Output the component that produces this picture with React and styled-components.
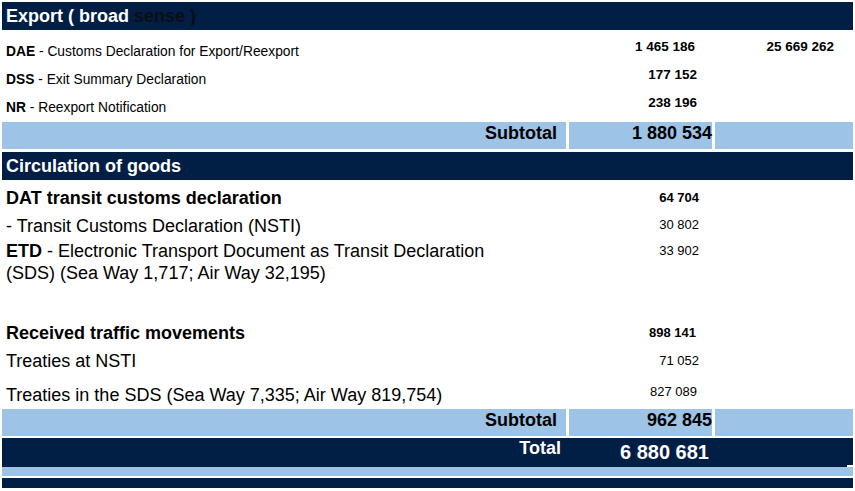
import styled, { createGlobalStyle } from "styled-components";

const navy = "#011e45";
const sky = "#9dc3e6";

const GlobalStyle = createGlobalStyle`
  html, body {
    margin: 0;
    padding: 0;
    background: #fff;
  }
  body {
    font-family: "Liberation Sans", Arial, sans-serif;
    color: #000;
  }
`;

const Sheet = styled.div`
  width: 851px;
  padding: 2px;
  display: flex;
  flex-direction: column;
`;

const SectionHeader = styled.div`
  height: 28px;
  margin-top: ${(p) => p.$mt || 0}px;
  padding-left: 4px;
  background: ${navy};
  color: #fff;
  font-size: 18px;
  font-weight: bold;
  display: flex;
  align-items: center;
  white-space: pre;

  & span {
    color: #0a0e16;
  }
`;

const Body = styled.div`
  padding-top: ${(p) => p.$pt}px;
  display: flex;
  flex-direction: column;
`;

const Row = styled.div`
  display: grid;
  grid-template-columns: 564px 143px 138px;
  column-gap: 3px;
  height: ${(p) => p.$h}px;
  margin-top: ${(p) => p.$mt || 0}px;
  align-items: center;
`;

const Label = styled.div`
  padding-left: 4px;
  font-size: ${(p) => p.$size}px;
  line-height: ${(p) => p.$lh || 22}px;
  font-weight: ${(p) => (p.$bold ? 700 : 400)};
  align-self: ${(p) => p.$self || "center"};
  margin-bottom: ${(p) => p.$mb || 0}px;
  white-space: nowrap;
`;

const Num = styled.div`
  text-align: right;
  font-size: ${(p) => p.$size || 13.5}px;
  line-height: ${(p) => p.$lh || 16}px;
  font-weight: ${(p) => (p.$bold ? 700 : 400)};
  padding-right: ${(p) => p.$pr}px;
  padding-bottom: ${(p) => p.$lift || 0}px;
  align-self: ${(p) => p.$self || "center"};
`;

const SumRow = styled.div`
  display: grid;
  grid-template-columns: 564px 143px 138px;
  column-gap: ${(p) => (p.$dark ? 0 : 3)}px;
  height: 27px;
  margin-top: ${(p) => p.$mt || 0}px;
  background: ${(p) => (p.$dark ? navy : "transparent")};
`;

const SumCell = styled.div`
  background: ${(p) => (p.$dark ? navy : sky)};
  color: ${(p) => (p.$dark ? "#fff" : "#000")};
  font-size: ${(p) => p.$size || 18}px;
  font-weight: bold;
  display: flex;
  align-items: center;
  justify-content: flex-end;
  padding-right: ${(p) => p.$pr || 0}px;
  padding-bottom: ${(p) => p.$lift || 0}px;
`;

const Band = styled.div`
  height: ${(p) => p.$h}px;
  margin-top: ${(p) => p.$mt || 0}px;
  background: ${(p) => (p.$dark ? navy : sky)};
`;

const exportRows = [
  { code: "DAE", text: "Customs Declaration for Export/Reexport", value: "1 465 186", extra: "25 669 262", pr: 17 },
  { code: "DSS", text: "Exit Summary Declaration", value: "177 152", pr: 15 },
  { code: "NR", text: "Reexport Notification", value: "238 196", pr: 15 },
];

export default function App() {
  return (
    <>
      <GlobalStyle />
      <Sheet>
        <SectionHeader>
          Export ( broad <span>sense )</span>
        </SectionHeader>
        <Body $pt={8}>
          {exportRows.map((r) => (
            <Row key={r.code} $h={28}>
              <Label $size={13.8}>
                <b>{r.code}</b> - {r.text}
              </Label>
              <Num $bold $pr={r.pr} $lift={10}>
                {r.value}
              </Num>
              <Num $bold $pr={19} $lift={10}>
                {r.extra || ""}
              </Num>
            </Row>
          ))}
        </Body>
        <SumRow>
          <SumCell $pr={9} $lift={5}>Subtotal</SumCell>
          <SumCell $lift={5}>1 880 534</SumCell>
          <SumCell />
        </SumRow>

        <SectionHeader $mt={3}>Circulation of goods</SectionHeader>
        <Body $pt={4}>
          <Row $h={28}>
            <Label $size={18} $bold>DAT transit customs declaration</Label>
            <Num $size={13} $bold $pr={13}>64 704</Num>
          </Row>
          <Row $h={28}>
            <Label $size={18}>- Transit Customs Declaration (NSTI)</Label>
            <Num $size={13} $pr={13} $lift={2}>30 802</Num>
          </Row>
          <Row $h={44}>
            <Label $size={18} $self="start">
              <b>ETD</b> - Electronic Transport Document as Transit Declaration
              <br />
              (SDS) (Sea Way 1,717; Air Way 32,195)
            </Label>
            <Num $size={13} $pr={13} $lh={22} $self="start">33 902</Num>
          </Row>
          <Row $h={28} $mt={35}>
            <Label $size={18} $bold>Received traffic movements</Label>
            <Num $size={13} $bold $pr={16}>898 141</Num>
          </Row>
          <Row $h={28}>
            <Label $size={18}>Treaties at NSTI</Label>
            <Num $size={13} $pr={13}>71 052</Num>
          </Row>
          <Row $h={33}>
            <Label $size={18} $self="end" $mb={2}>
              Treaties in the SDS (Sea Way 7,335; Air Way 819,754)
            </Label>
            <Num $size={13} $pr={15}>827 089</Num>
          </Row>
        </Body>
        <SumRow $mt={1}>
          <SumCell $pr={9} $lift={5}>Subtotal</SumCell>
          <SumCell $lift={4}>962 845</SumCell>
          <SumCell />
        </SumRow>
        <SumRow $mt={2} $dark>
          <SumCell $dark $pr={5} $lift={8}>Total</SumCell>
          <SumCell $dark $size={20} $pr={0}>6 880 681</SumCell>
          <SumCell $dark />
        </SumRow>
        <Band $h={9} $mt={2} />
        <Band $h={10} $mt={2} $dark />
      </Sheet>
    </>
  );
}
